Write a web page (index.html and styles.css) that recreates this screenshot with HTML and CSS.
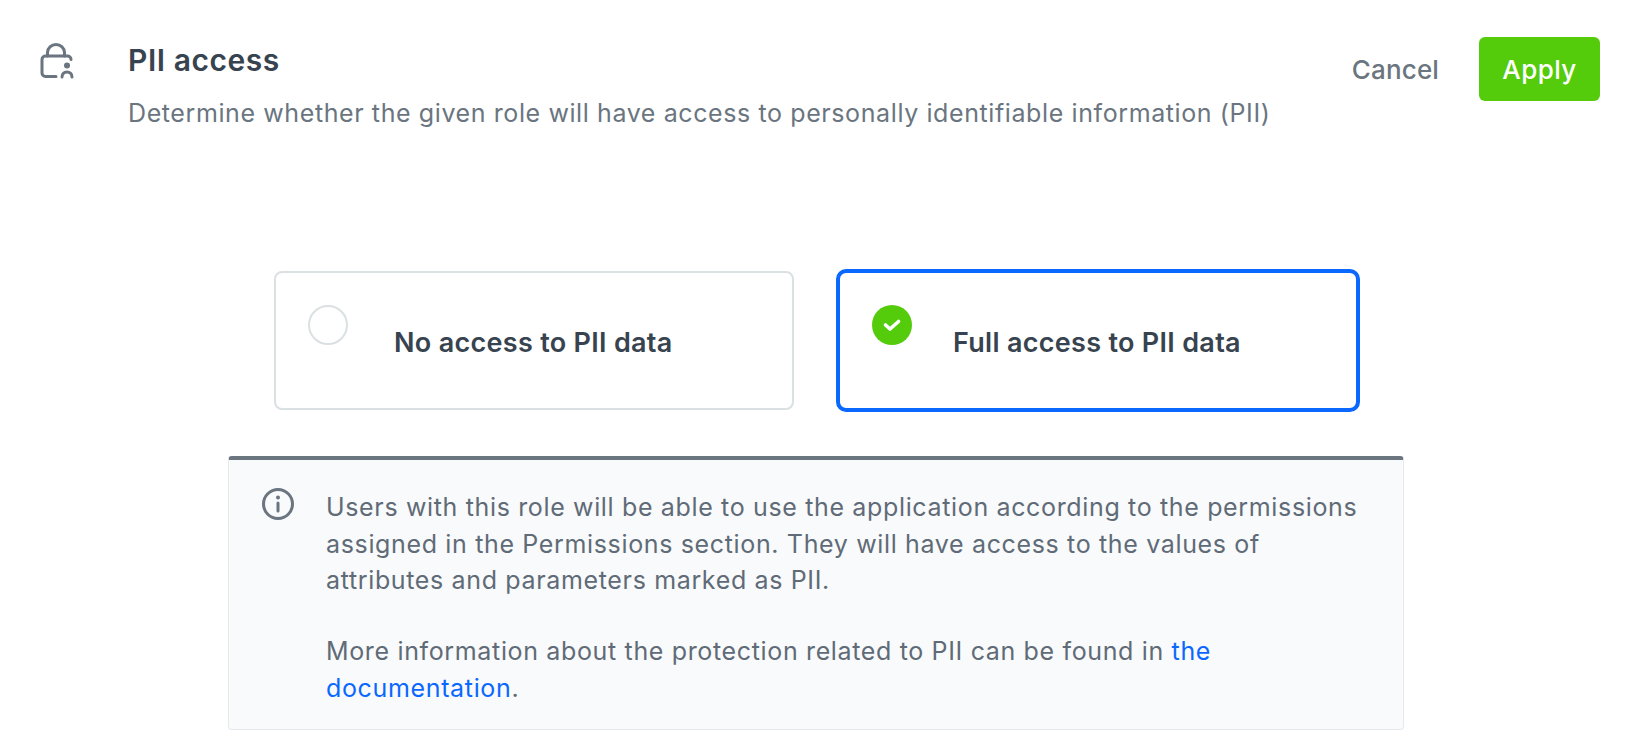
FILE: index.html
```html
<!DOCTYPE html>
<html lang="en">
<head>
<meta charset="utf-8">
<title>PII access</title>
<link rel="stylesheet" href="styles.css">
</head>
<body>
<header class="header">
  <svg class="lock" viewBox="0 0 34 36" fill="none" stroke="#6a7580" stroke-width="3" stroke-linecap="round" stroke-linejoin="round">
    <path d="M7.500 13V9.500a8.500 8 0 0 1 17 0V13"/>
    <path d="M31 16.500a3.500 3.500 0 0 0-3.500-3.500H5.500A3.500 3.500 0 0 0 2 16.500V30a3.500 3.500 0 0 0 3.500 3.500H16"/>
    <circle cx="27" cy="22.500" r="3" fill="#6a7580" stroke="none"/>
    <path d="M22 34c0-3 2-5 5-5s5 2 5 5"/>
  </svg>
  <div class="heading">
    <h1 class="title">PII access</h1>
    <p class="subtitle">Determine whether the given role will have access to personally identifiable information (PII)</p>
  </div>
  <div class="actions">
    <span class="cancel">Cancel</span>
    <span class="apply">Apply</span>
  </div>
</header>
<main class="content">
  <div class="options">
    <div class="option">
      <span class="radio"></span>
      <span class="option-label">No access to PII data</span>
    </div>
    <div class="option selected">
      <svg class="check" viewBox="0 0 40 40">
        <circle cx="20" cy="20" r="20" fill="#54cb0b"/>
        <path d="M13.500 20l4.500 4 8.500-7.500" fill="none" stroke="#fff" stroke-width="3.600" stroke-linecap="round" stroke-linejoin="round"/>
      </svg>
      <span class="option-label">Full access to PII data</span>
    </div>
  </div>
  <section class="notice">
    <svg class="info" viewBox="0 0 32 32" fill="none" stroke="#6a7580" stroke-width="3" stroke-linecap="round">
      <circle cx="16" cy="16" r="14.500"/>
      <path d="M16 15v8"/>
      <circle cx="16" cy="9.500" r="2" fill="#6a7580" stroke="none"/>
    </svg>
    <div class="notice-text">
      <p>Users with this role will be able to use the application according to the permissions assigned in the Permissions section. They will have access to the values of attributes and parameters marked as PII.</p>
      <p>More information about the protection related to PII can be found in <a href="#">the documentation</a>.</p>
    </div>
  </section>
</main>
</body>
</html>
```
FILE: styles.css
```css
* { box-sizing: border-box; }
html, body { margin: 0; padding: 0; background: #fff; }
body {
  width: 1640px;
  height: 752px;
  overflow: hidden;
  font-family: Inter, "Noto Sans", sans-serif;
  color: #384350;
}
.header {
  display: flex;
  align-items: flex-start;
  padding: 37px 40px 0 40px;
  height: 269px;
}
.lock { width: 34px; height: 36px; margin-top: 6px; flex: none; }
.heading { margin-left: 54px; flex: 1; }
.title {
  margin: 4px 0 0;
  font-size: 30px;
  line-height: 38px;
  font-weight: 600;
  letter-spacing: 0.55px;
  color: #384350;
}
.subtitle {
  margin: 16px 0 0;
  font-size: 25px;
  line-height: 36px;
  letter-spacing: 0.6px;
  color: #6a7580;
}
.actions { display: flex; align-items: center; height: 64px; }
.cancel { font-size: 26px; font-weight: 500; letter-spacing: 0.15px; color: #6a7580; margin-right: 40px; }
.apply {
  display: flex;
  align-items: center;
  justify-content: center;
  width: 121px;
  height: 64px;
  border-radius: 6px;
  background: #54cb0b;
  color: #fff;
  font-size: 26px;
  font-weight: 500;
  letter-spacing: 0.4px;
}
.content { margin-left: 228px; width: 1176px; }
.options { display: flex; justify-content: center; gap: 44px; padding-top: 2px; }
.option {
  position: relative;
  display: flex;
  align-items: center;
  width: 520px;
  height: 139px;
  padding: 3px 0 0 118px;
  border: 2px solid #dbe0e3;
  border-radius: 8px;
  background: #fff;
}
.option.selected {
  width: 524px;
  height: 143px;
  margin: -2px;
  padding-left: 113px;
  border: 4px solid #0b68ff;
  border-radius: 10px;
}
.radio {
  position: absolute;
  left: 32px;
  top: 32px;
  width: 40px;
  height: 40px;
  border: 2px solid #dbe0e3;
  border-radius: 50%;
}
.check { position: absolute; left: 32px; top: 32px; width: 40px; height: 40px; }
.option-label { font-size: 27px; font-weight: 600; letter-spacing: 0.3px; color: #384350; }
.notice {
  display: flex;
  margin-top: 46px;
  height: 274px;
  padding: 28px 0 0 33px;
  background: #f9fafb;
  border: 1px solid #e6e9ec;
  border-top: 4px solid #6a7580;
  border-radius: 4px;
}
.info { width: 32px; height: 32px; flex: none; }
.notice-text {
  width: 1035px;
  margin: 1px 0 0 32px;
  font-size: 25px;
  line-height: 36.600px;
  letter-spacing: 0.65px;
  color: #5f6b77;
}
.notice-text p { margin: 0 0 34.500px; }
.notice-text a { color: #0b68ff; text-decoration: none; }
```
